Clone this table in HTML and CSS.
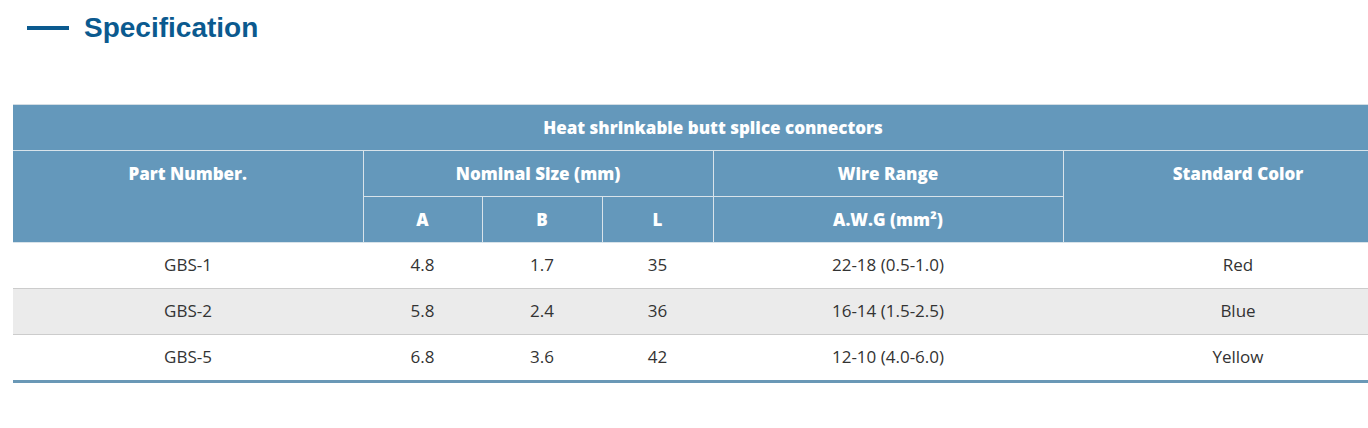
FILE: index.html
```html
<!DOCTYPE html>
<html>
<head>
<meta charset="utf-8">
<link rel="stylesheet" href="styles.css">
</head>
<body>
<div class="page">
  <h2 class="title"><span class="dash"></span>Specification</h2>
  <table class="spec">
    <colgroup>
      <col class="c-part"><col class="c-a"><col class="c-b"><col class="c-l"><col class="c-wire"><col class="c-color">
    </colgroup>
    <thead>
      <tr><th colspan="6" class="caption">Heat shrinkable butt splice connectors</th></tr>
      <tr>
        <th rowspan="2" class="top">Part Number.</th>
        <th colspan="3">Nominal Size (mm)</th>
        <th>Wire Range</th>
        <th rowspan="2" class="top">Standard Color</th>
      </tr>
      <tr>
        <th>A</th><th>B</th><th>L</th><th>A.W.G (mm²)</th>
      </tr>
    </thead>
    <tbody>
      <tr><td>GBS-1</td><td>4.8</td><td>1.7</td><td>35</td><td>22-18 (0.5-1.0)</td><td>Red</td></tr>
      <tr class="alt"><td>GBS-2</td><td>5.8</td><td>2.4</td><td>36</td><td>16-14 (1.5-2.5)</td><td>Blue</td></tr>
      <tr><td>GBS-5</td><td>6.8</td><td>3.6</td><td>42</td><td>12-10 (4.0-6.0)</td><td>Yellow</td></tr>
    </tbody>
  </table>
</div>
</body>
</html>
```
FILE: styles.css
```css
html, body {
  margin: 0;
  padding: 0;
  background: #fff;
  overflow: hidden;
}
.page {
  padding: 0 0 0 13px;
  width: 1400px;
}
.title {
  margin: 0;
  display: flex;
  align-items: center;
  height: 56px;
  font-family: "Liberation Sans", Arial, sans-serif;
  font-weight: bold;
  font-size: 28px;
  color: #0b5a8f;
  padding-left: 14px;
}
.dash {
  display: inline-block;
  width: 42px;
  height: 4px;
  background: #0b5a8f;
  margin-right: 15px;
}
.spec {
  margin-top: 48px;
  width: 1400px;
  border-collapse: collapse;
  table-layout: fixed;
  font-family: "Open Sans", sans-serif;
  font-size: 17px;
  border-top: 1px solid #d3dde4;
  border-bottom: 3px solid #6a98b6;
}
.c-part { width: 350px; }
.c-a { width: 119px; }
.c-b { width: 120px; }
.c-l { width: 111px; }
.c-wire { width: 350px; }
.c-color { width: 350px; }
.spec th {
  background: #6498bb;
  color: #fff;
  font-weight: 800;
  height: 45px;
  padding: 0;
  border: 1px solid #d8e3ea;
  border-top: none;
  text-align: center;
  vertical-align: middle;
  line-height: 22px;
}
.spec th:first-child { border-left: none; }
.spec th.caption { border-left: none; border-right: none; }
.spec th.top {
  vertical-align: top;
  padding-top: 12px;
}
.spec td {
  height: 43px;
  padding: 0 0 2px;
  text-align: center;
  vertical-align: middle;
  color: #333;
  border-bottom: 1px solid #cccccc;
  line-height: 22px;
}
.spec tbody tr:last-child td { border-bottom: none; }
.spec tr.alt td { background: #ebebeb; }
```
